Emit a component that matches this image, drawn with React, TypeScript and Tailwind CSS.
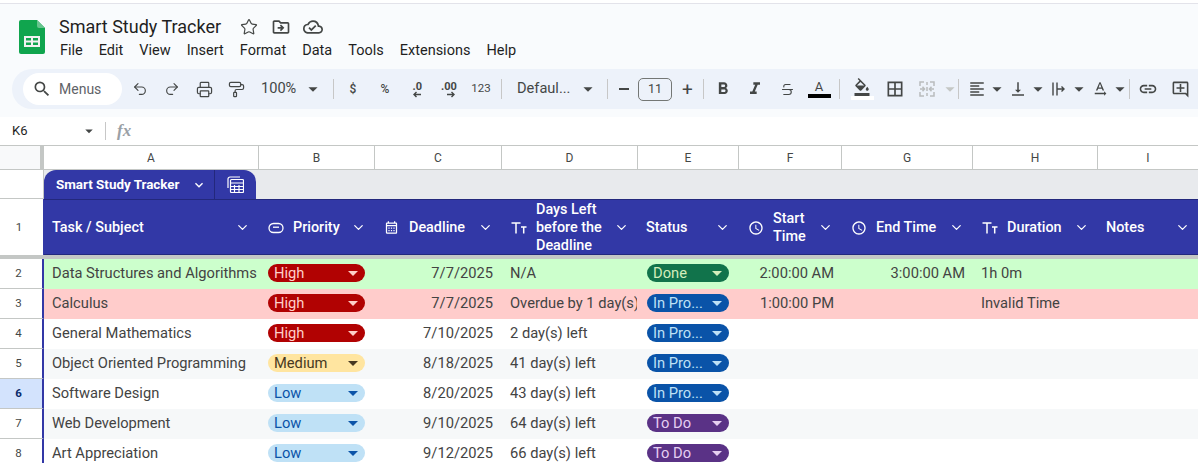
import type { ReactNode } from 'react'
import { ChevronDown, PaintRoller, Printer, Redo2, Star, Strikethrough, Undo2 } from 'lucide-react'
import {
  MdArrowDropDown,
  MdBorderAll,
  MdExpandMore,
  MdFormatAlignLeft,
  MdFormatBold,
  MdFormatItalic,
  MdLink,
  MdOutlineAccessTime,
  MdOutlineAddComment,
  MdOutlineCalendarMonth,
  MdOutlineCloudDone,
  MdOutlineDriveFileMove,
  MdOutlineFormatColorFill,
  MdSearch,
  MdTextRotationNone,
  MdVerticalAlignBottom,
} from 'react-icons/md'

const COLS = 'grid grid-cols-[44px_214px_116px_127px_136px_101px_103px_131px_125px_101px]'
const LETTER_COLS = 'grid grid-cols-[44px_215px_116px_127px_136px_101px_103px_131px_125px_100px]'

type Tone = 'high' | 'medium' | 'low' | 'done' | 'progress' | 'todo'

const pillTone: Record<Tone, string> = {
  high: 'bg-[#b10202] text-[#ffcfc9]',
  medium: 'bg-[#ffe5a0] text-[#473821]',
  low: 'bg-[#bfe1f6] text-[#0a53a8]',
  done: 'bg-[#11734b] text-[#d4edbc]',
  progress: 'bg-[#0a53a8] text-[#bfe1f6]',
  todo: 'bg-[#5a3286] text-[#e6cff2]',
}

const rows: {
  n: number
  task: string
  priority: [string, Tone]
  deadline: string
  left: string
  status: [string, Tone]
  start?: string
  end?: string
  duration?: string
  bg: string
}[] = [
  { n: 2, task: 'Data Structures and Algorithms', priority: ['High', 'high'], deadline: '7/7/2025', left: 'N/A', status: ['Done', 'done'], start: '2:00:00 AM', end: '3:00:00 AM', duration: '1h 0m', bg: 'bg-[#ccffcc]' },
  { n: 3, task: 'Calculus', priority: ['High', 'high'], deadline: '7/7/2025', left: 'Overdue by 1 day(s)', status: ['In Pro...', 'progress'], start: '1:00:00 PM', duration: 'Invalid Time', bg: 'bg-[#ffcccb]' },
  { n: 4, task: 'General Mathematics', priority: ['High', 'high'], deadline: '7/10/2025', left: '2 day(s) left', status: ['In Pro...', 'progress'], bg: 'bg-white' },
  { n: 5, task: 'Object Oriented Programming', priority: ['Medium', 'medium'], deadline: '8/18/2025', left: '41 day(s) left', status: ['In Pro...', 'progress'], bg: 'bg-[#f6f8f9]' },
  { n: 6, task: 'Software Design', priority: ['Low', 'low'], deadline: '8/20/2025', left: '43 day(s) left', status: ['In Pro...', 'progress'], bg: 'bg-white' },
  { n: 7, task: 'Web Development', priority: ['Low', 'low'], deadline: '9/10/2025', left: '64 day(s) left', status: ['To Do', 'todo'], bg: 'bg-[#f6f8f9]' },
  { n: 8, task: 'Art Appreciation', priority: ['Low', 'low'], deadline: '9/12/2025', left: '66 day(s) left', status: ['To Do', 'todo'], bg: 'bg-white' },
]

function SheetsLogo() {
  return (
    <svg width="26" height="34" viewBox="0 0 26 34" className="shrink-0">
      <path d="M2 0h16l8 8v24a2 2 0 0 1-2 2H2a2 2 0 0 1-2-2V2a2 2 0 0 1 2-2z" fill="#10a54e" />
      <path d="M18 0l8 8h-6a2 2 0 0 1-2-2z" fill="#67c48e" />
      <path d="M5 16h16v11H5zm2 2v2.500h5V18zm7 0v2.500h5V18zm-7 4.500V25h5v-2.500zm7 0V25h5v-2.500z" fill="#f1f1f1" fillRule="evenodd" />
    </svg>
  )
}

function Sep({ className = 'mx-[7px]' }: { className?: string }) {
  return <span className={`h-5 w-px shrink-0 bg-[#c7c7c7] ${className}`} />
}

function Btn({ children, w = 'w-8' }: { children: ReactNode; w?: string }) {
  return <span className={`flex h-8 shrink-0 items-center justify-center text-[#444746] ${w}`}>{children}</span>
}

function Caret({ className = 'text-[#444746]' }: { className?: string }) {
  return <MdArrowDropDown size={22} className={`shrink-0 ${className}`} />
}

function DropIcon({ children }: { children: ReactNode }) {
  return (
    <span className="flex h-8 w-[41px] shrink-0 items-center text-[#444746]">
      <span className="flex w-6 shrink-0 justify-center">{children}</span>
      <MdArrowDropDown size={22} className="-ml-[3px] shrink-0" />
    </span>
  )
}

function DecimalIcon({ label, dir }: { label: string; dir: 'left' | 'right' }) {
  return (
    <span className="flex flex-col items-end leading-none">
      <span className="text-[11px] font-bold leading-[11px]">{label}</span>
      <svg width="9" height="7" viewBox="0 0 9 7" className="-mt-[1px] mr-[1px]">
        {dir === 'left' ? (
          <path d="M9 3.500H2.500M4.500 1L2 3.500 4.500 6" fill="none" stroke="#444746" strokeWidth="1.400" />
        ) : (
          <path d="M0 3.500h6.500M4.500 1L7 3.500 4.500 6" fill="none" stroke="#444746" strokeWidth="1.400" />
        )}
      </svg>
    </span>
  )
}

function TextTypeIcon() {
  return (
    <svg width="16" height="13" viewBox="0 0 16 13" fill="none" stroke="#fff" strokeWidth="1.500">
      <path d="M0.500 2h9M5 2v10.500M10 6h5.500M12.700 6v6.500" />
    </svg>
  )
}

function Toolbar() {
  return (
    <div className="ml-3 flex h-10 items-center rounded-l-[20px] bg-[#edf2fa] pl-[11px] font-['Roboto',sans-serif]">
      <div className="flex h-8 w-[99px] shrink-0 items-center rounded-full bg-white pl-[9px] text-[#444746]">
        <MdSearch size={20} />
        <span className="ml-[7px] text-[14px] text-[#5f6368]">Menus</span>
      </div>
      <span className="w-[2px] shrink-0" />
      <Btn><Undo2 size={16} strokeWidth={1.700} /></Btn>
      <Btn><Redo2 size={16} strokeWidth={1.700} /></Btn>
      <Btn><Printer size={17} strokeWidth={1.700} /></Btn>
      <Btn><PaintRoller size={17} strokeWidth={1.700} /></Btn>
      <span className="flex h-8 w-[74px] shrink-0 items-center pl-[9px] text-[14.600px] text-[#444746]">
        <span>100%</span>
        <Caret className="ml-[6px] text-[#444746]" />
      </span>
      <Sep />
      <span className="-ml-[4px] flex">
        <Btn><span className="text-[12px] font-medium">$</span></Btn>
        <Btn><span className="text-[12px] font-medium">%</span></Btn>
        <Btn><DecimalIcon label=".0" dir="left" /></Btn>
        <Btn><DecimalIcon label=".00" dir="right" /></Btn>
        <Btn><span className="text-[11.500px]">123</span></Btn>
      </span>
      <Sep className="ml-[4px] mr-[15px]" />
      <span className="flex w-[90px] shrink-0 items-center text-[14.600px] text-[#444746]">
        <span>Defaul...</span>
        <Caret className="ml-[7px] text-[#444746]" />
      </span>
      <Sep className="ml-0 mr-[8px]" />
      <Btn w="w-[16px]"><span className="h-[1.500px] w-[10px] bg-[#444746]" /></Btn>
      <span className="ml-[6px] flex h-[23px] w-[34px] shrink-0 items-center justify-center rounded-[5px] border border-[#747775] text-[12.500px] text-[#444746]">11</span>
      <Btn w="w-[31px]"><span className="text-[19px] leading-none">+</span></Btn>
      <Sep className="ml-0 mr-[3px]" />
      <Btn><MdFormatBold size={20} /></Btn>
      <Btn><MdFormatItalic size={20} /></Btn>
      <Btn><Strikethrough size={15} strokeWidth={1.800} /></Btn>
      <span className="flex h-8 w-8 shrink-0 flex-col items-center justify-center text-[#444746]">
        <span className="text-[13px] leading-[14px]">A</span>
        <span className="h-1 w-[23px] bg-black" />
      </span>
      <Sep className="ml-[4px] mr-[6px]" />
      <span className="flex h-8 w-8 shrink-0 flex-col items-center justify-center text-[#444746]">
        <MdOutlineFormatColorFill size={18} />
        <span className="h-1 w-[23px] bg-white" />
      </span>
      <span className="ml-[1px]">
        <Btn><MdBorderAll size={20} /></Btn>
      </span>
      <span className="flex h-8 w-[32px] shrink-0 items-center justify-center">
        <svg width="16" height="16" viewBox="0 0 16 16" fill="none" stroke="#b9bcbd" strokeWidth="1.500">
          <path d="M1 5V1h4M11 1h4v4M15 11v4h-4M5 15H1v-4M8 1v3M8 6v4M8 12v3M1 8h4M3.500 5.800L5.500 8l-2 2.200M15 8h-4M12.500 5.800L10.500 8l2 2.200" />
        </svg>
      </span>
      <Caret className="-ml-[4px] -mr-[2px] text-[#c4c7c5]" />
      <Sep className="-ml-[1px] mr-[6px]" />
      <DropIcon><MdFormatAlignLeft size={18} /></DropIcon>
      <DropIcon><MdVerticalAlignBottom size={18} /></DropIcon>
      <DropIcon>
        <svg width="16" height="16" viewBox="0 0 16 16" fill="none" stroke="#444746" strokeWidth="1.400">
          <path d="M2 1.500v13M6 1.500v13" />
          <path d="M6 8h7M10.500 5.500L13 8l-2.500 2.500" />
        </svg>
      </DropIcon>
      <DropIcon><MdTextRotationNone size={18} /></DropIcon>
      <Sep className="ml-0 mr-[2px]" />
      <Btn><MdLink size={20} /></Btn>
      <Btn><MdOutlineAddComment size={19} /></Btn>
    </div>
  )
}

function HeaderCell({ icon, first, children }: { icon?: ReactNode; first?: boolean; children: ReactNode }) {
  return (
    <div className={`flex h-full min-w-0 items-center pt-[1px] text-[14.400px] font-medium leading-[18px] text-white ${first ? 'pl-2' : 'pl-[9px]'}`}>
      {icon && <span className="mr-[9px] flex w-[17px] shrink-0 justify-center">{icon}</span>}
      <span>{children}</span>
      <ChevronDown size={15} strokeWidth={2} className="ml-auto mr-2 shrink-0 text-white" />
    </div>
  )
}

function Pill({ label, tone, w }: { label: string; tone: Tone; w: string }) {
  return (
    <span className={`flex h-[18px] items-center justify-between rounded-full pl-[6px] text-[14.700px] leading-none ${pillTone[tone]} ${w}`}>
      <span>{label}</span>
      <MdArrowDropDown size={24} className="-my-1 shrink-0" />
    </span>
  )
}

function Row({ r }: { r: (typeof rows)[number] }) {
  const selected = r.n === 6
  return (
    <div className={`${COLS} h-[30px] shrink-0 text-[14.700px] text-[#434343]`}>
      <div
        className={`flex items-center justify-center border-b border-b-[#c4c7c5] border-r-2 border-r-[#3238a6] pr-[5px] text-[11.500px] ${
          selected ? 'bg-[#d3e3fd] font-bold text-[#0b2a6b]' : 'bg-white text-[#444746]'
        }`}
      >
        {r.n}
      </div>
      <div className={`flex items-center overflow-hidden whitespace-nowrap pb-[2px] pl-2 ${r.bg}`}>{r.task}</div>
      <div className={`flex items-center pb-[2px] pl-[10px] ${r.bg}`}>
        <Pill label={r.priority[0]} tone={r.priority[1]} w="w-[97px]" />
      </div>
      <div className={`flex items-center justify-end pb-[2px] pr-2 ${r.bg}`}>{r.deadline}</div>
      <div className={`flex items-center overflow-hidden whitespace-nowrap pb-[2px] pl-[9px] ${r.bg}`}>{r.left}</div>
      <div className={`flex items-center pb-[2px] pl-[10px] ${r.bg}`}>
        <Pill label={r.status[0]} tone={r.status[1]} w="w-[82px]" />
      </div>
      <div className={`flex items-center justify-end pb-[2px] pr-[7px] ${r.bg}`}>{r.start}</div>
      <div className={`flex items-center justify-end pb-[2px] pr-[7px] ${r.bg}`}>{r.end}</div>
      <div className={`flex items-center pb-[2px] pl-[9px] ${r.bg}`}>{r.duration}</div>
      <div className={r.bg} />
    </div>
  )
}

export default function App() {
  const letters = ['A', 'B', 'C', 'D', 'E', 'F', 'G', 'H', 'I']
  return (
    <div className="flex h-[463px] w-[1198px] flex-col overflow-hidden bg-white font-['Roboto',sans-serif]">
      <div className="h-[4px] shrink-0 border-b border-[#e3e3ea] bg-white" />

      {/* title + menus */}
      <div className="h-[113px] shrink-0 bg-[#f9fbfd]">
        <div className="flex h-[65px] pl-[19px]">
          <div className="mt-[16px]"><SheetsLogo /></div>
          <div className="ml-[14px] flex flex-col">
            <div className="mt-[11px] flex h-6 items-center text-[#1f1f1f]">
              <span className="text-[18px] leading-6">Smart Study Tracker</span>
              <span className="ml-[18px] flex items-center gap-[12px] text-[#444746]">
                <Star size={18} strokeWidth={1.600} className="mx-[1px]" />
                <MdOutlineDriveFileMove size={20} />
                <MdOutlineCloudDone size={20} />
              </span>
            </div>
            <div className="mt-[2px] flex gap-4 pl-[1px] text-[14.500px] leading-[20px] text-[#1f1f1f]">
              {['File', 'Edit', 'View', 'Insert', 'Format', 'Data', 'Tools', 'Extensions', 'Help'].map((m) => (
                <span key={m}>{m}</span>
              ))}
            </div>
          </div>
        </div>
        <Toolbar />
      </div>

      {/* formula bar */}
      <div className="flex h-[29px] shrink-0 items-center border-b border-[#c4c7c5] bg-white">
        <span className="ml-3 w-[68px] text-[13px] text-[#1f1f1f]">K6</span>
        <MdArrowDropDown size={18} className="text-[#444746]" />
        <span className="ml-[7px] h-[18px] w-px bg-[#c7c7c7]" />
        <span className="ml-[11px] font-['Liberation_Serif',serif] text-[17px] font-bold italic text-[#9aa0a6]">fx</span>
      </div>

      {/* column letters */}
      <div className={`${LETTER_COLS} h-[24px] shrink-0 border-b border-[#c4c7c5] bg-white`}>
        <div className="border-r-[4px] border-r-[#c4c7c5] bg-[#f8f9fa]" />
        {letters.map((l) => (
          <div key={l} className="flex items-center justify-center border-r border-[#c4c7c5] text-[12px] text-[#444746] last:border-r-0">
            {l}
          </div>
        ))}
      </div>

      {/* table name row */}
      <div className="flex h-[29px] shrink-0">
        <div className="w-[44px] shrink-0 border-b border-r border-[#c4c7c5] bg-white" />
        <div className="flex flex-1 bg-[#e8eaed]">
          <div className="flex w-[212px] rounded-t-[12px] bg-[#3238a6] text-white">
            <div className="flex w-[171px] items-center border-r border-[#23287c] pl-3 pt-[1px] text-[13.400px] font-bold">
              <span>Smart Study Tracker</span>
              <MdExpandMore size={16} className="ml-auto mr-[7px]" />
            </div>
            <div className="flex flex-1 items-center justify-center">
              <svg width="17" height="17" viewBox="0 0 17 17" fill="none" stroke="#fff" strokeWidth="1.200">
                <path d="M1 12V3a2 2 0 0 1 2-2h10" />
                <rect x="3.500" y="3.500" width="13" height="13" rx="1" fill="#3238a6" />
                <path d="M3.500 7h13M7.500 9v7M12 9v7M3.500 10.500h13M3.500 13.500h13" />
              </svg>
            </div>
          </div>
        </div>
      </div>

      {/* header row */}
      <div className={`${COLS} h-[56px] shrink-0`}>
        <div className="flex items-center justify-center border-r border-[#3238a6] bg-white pr-[5px] pt-[1px] text-[11.500px] text-[#444746]">1</div>
        <div className="col-span-9 grid grid-cols-subgrid bg-[#3238a6] shadow-[inset_0_1px_0_#23287c,inset_0_-1px_0_#23287c]">
          <HeaderCell first>Task / Subject</HeaderCell>
          <HeaderCell
            icon={
              <svg width="16" height="12" viewBox="0 0 16 12" fill="none" stroke="#fff" strokeWidth="1.300">
                <rect x="1" y="1.500" width="14" height="9" rx="4.500" />
                <path d="M5 5.200h6" />
              </svg>
            }
          >
            Priority
          </HeaderCell>
          <HeaderCell icon={<MdOutlineCalendarMonth size={15} />}>Deadline</HeaderCell>
          <HeaderCell icon={<TextTypeIcon />}>
            Days Left
            <br />
            before the
            <br />
            Deadline
          </HeaderCell>
          <HeaderCell>Status</HeaderCell>
          <HeaderCell icon={<MdOutlineAccessTime size={16} />}>
            Start
            <br />
            Time
          </HeaderCell>
          <HeaderCell icon={<MdOutlineAccessTime size={16} />}>End Time</HeaderCell>
          <HeaderCell icon={<TextTypeIcon />}>Duration</HeaderCell>
          <HeaderCell>Notes</HeaderCell>
        </div>
      </div>

      {/* frozen divider */}
      <div className="h-[4px] shrink-0 bg-[#c4c7c5]" />

      {rows.map((r) => (
        <Row key={r.n} r={r} />
      ))}
    </div>
  )
}
